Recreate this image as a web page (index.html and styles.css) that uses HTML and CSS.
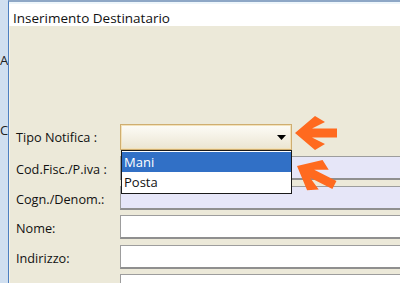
FILE: index.html
```html
<!DOCTYPE html>
<html>
<head>
<meta charset="utf-8">
<link rel="stylesheet" href="styles.css">
</head>
<body>
<div class="screen">
  <div class="behind">
    <span class="ghost ghost-a">A</span>
    <span class="ghost ghost-c">C</span>
  </div>
  <div class="dialog">
    <div class="titlebar">Inserimento Destinatario</div>
    <div class="content">
      <div class="form">
        <label class="lbl">Tipo Notifica :</label>
        <div class="combo-wrap">
          <div class="combo">
            <svg class="caret" width="9" height="5" viewBox="0 0 9 5"><polygon points="0,0 9,0 4.5,5" fill="#000"/></svg>
          </div>
          <ul class="dropdown">
            <li class="opt sel">Mani</li>
            <li class="opt">Posta</li>
          </ul>
        </div>
        <label class="lbl">Cod.Fisc./P.iva :</label>
        <div class="field lav"></div>
        <label class="lbl">Cogn./Denom.:</label>
        <div class="field lav"></div>
        <label class="lbl">Nome:</label>
        <div class="field"></div>
        <label class="lbl">Indirizzo:</label>
        <div class="field"></div>
        <label class="lbl"></label>
        <div class="field"></div>
      </div>
      <svg class="arrow arrow-1" width="48" height="38" viewBox="0 0 48 38">
        <polygon transform="translate(2,18)" points="0,0 20,-17 30,-11 17,-4.5 42,-4.5 42,4.5 17,4.5 30,11 20,17" fill="#FF6A1F"/>
      </svg>
      <svg class="arrow arrow-2" width="48" height="46" viewBox="0 0 48 46">
        <polygon transform="translate(3,15) rotate(27)" points="0,0 20,-17 30,-11 17,-4.5 42,-4.5 42,4.5 17,4.5 30,11 20,17" fill="#FF6A1F"/>
      </svg>
    </div>
  </div>
</div>
</body>
</html>
```
FILE: styles.css
```css
html, body {
  margin: 0;
  padding: 0;
  width: 400px;
  height: 283px;
  overflow: hidden;
  background: #d3e1f1;
}
.screen {
  display: flex;
  width: 400px;
  height: 283px;
}
.behind {
  width: 8px;
  flex: none;
  background: #d0dff0;
  display: flex;
  flex-direction: column;
  overflow: hidden;
  font-family: "Open Sans", sans-serif;
  font-size: 13px;
  color: #222;
}
.ghost {
  display: block;
  line-height: 14px;
}
.ghost-a { margin-top: 53px; }
.ghost-c { margin-top: 56px; }
.dialog {
  flex: 1;
  display: flex;
  flex-direction: column;
  border-left: 1px solid #4d7fc0;
  border-top: 2px solid #8ea7c6;
  background: #ece9d9;
  position: relative;
}
.titlebar {
  height: 28px;
  background: #ffffff;
  border-top: 2px solid #eef6fb;
  box-sizing: border-box;
  padding-left: 4px;
  padding-top: 6px;
  font-family: "Open Sans", sans-serif;
  font-size: 13.5px;
  color: #111;
  line-height: 16px;
}
.content {
  flex: 1;
  position: relative;
  padding-top: 98px;
  border-left: 1px solid #f6f3e8;
}
.form {
  display: grid;
  grid-template-columns: 104px 1fr;
  row-gap: 5.5px;
  padding-left: 6px;
  font-family: "Open Sans", sans-serif;
  font-size: 12.7px;
  color: #111;
}
.lbl {
  display: flex;
  align-items: center;
  height: 24px;
  padding-top: 2px;
  box-sizing: border-box;
  white-space: nowrap;
}
.combo-wrap {
  position: relative;
  height: 26px;
  margin-bottom: 0.5px;
}
.combo {
  width: 172px;
  height: 26px;
  box-sizing: border-box;
  border: 1px solid #cfae70;
  box-shadow: inset 0 0 0 1px #f3e2ba;
  background: linear-gradient(#fdfcf7, #ebe5d2);
  display: flex;
  align-items: center;
  justify-content: flex-end;
  padding-right: 5px;
}
.caret { display: block; }
.dropdown {
  position: absolute;
  left: 1px;
  top: 26px;
  width: 171px;
  margin: 0;
  padding: 1px 0;
  list-style: none;
  background: #fff;
  border: 1px solid #1a1a1a;
  box-sizing: border-box;
  z-index: 5;
}
.opt {
  height: 20px;
  line-height: 20px;
  padding-left: 2px;
  font-size: 13px;
  color: #111;
}
.opt.sel {
  background: #3170c6;
  color: #fff;
}
.field {
  height: 24px;
  box-sizing: border-box;
  background: #ffffff;
  border-top: 1px solid #9d9d9d;
  border-left: 1px solid #9d9d9d;
  border-bottom: 2px solid #8f8f8f;
}
.field.lav { background: #e6e6f8; }
.arrow {
  position: absolute;
  display: block;
  z-index: 6;
}
.arrow-1 { left: 283px; top: 89px; }
.arrow-2 { left: 284px; top: 125px; }
```
